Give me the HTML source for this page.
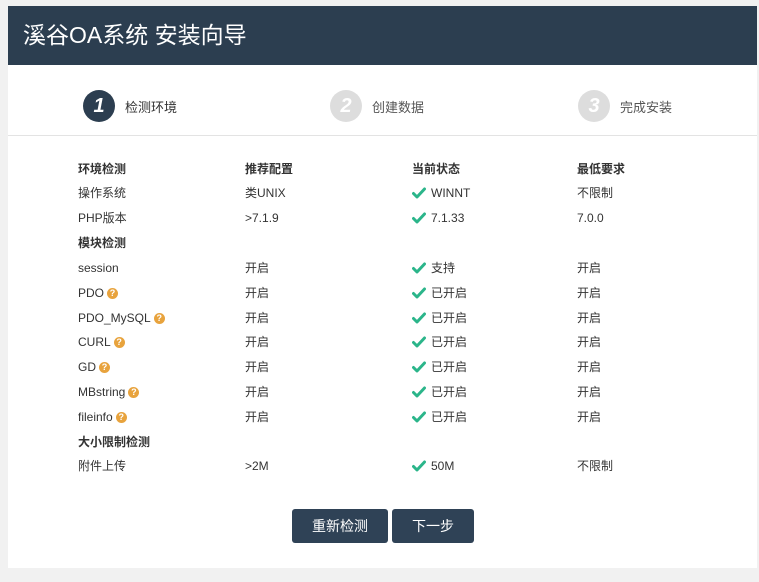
<!DOCTYPE html>
<html><head><meta charset="utf-8"><style>
*{margin:0;padding:0;box-sizing:border-box}
body{width:759px;height:582px;background:#f1f1f1;font-family:"Liberation Sans","Noto Sans CJK SC",sans-serif;position:relative;overflow:hidden}
.panel{position:absolute;left:8px;top:6px;width:749px;height:562px;background:#fff}
.hd{height:59px;background:#2c3e50;color:#fff;font-size:23px;line-height:30px;padding:14px 0 0 15px}
.steps{height:71px;border-bottom:1px solid #e3e3e3;position:relative}
.st{position:absolute;top:25px;display:flex;align-items:center;font-size:13px;color:#555}
.c{width:32px;height:32px;border-radius:50%;background:#ddd;color:#fff;font-weight:bold;font-style:italic;font-size:20px;display:flex;align-items:center;justify-content:center;margin-right:10px}
.st.on .c{background:#2c3e50}
.st.on{color:#333}
.r{position:absolute;left:70px;font-size:12px;color:#333;height:16px}
.r span{position:absolute;white-space:nowrap;top:0;height:16px;line-height:16px;display:flex;align-items:center}
.b{font-weight:bold}
.q{display:inline-block;width:11px;height:11px;border-radius:50%;background:#e8a33d;color:#fff;font-size:9px;text-align:center;line-height:11px;font-weight:bold;font-style:normal;margin-left:3px}
.ck{display:inline-block;width:14px;height:12px;margin-right:5px}
.btn{position:absolute;top:503px;height:34px;background:#2f4256;color:#fff;font-size:14px;border-radius:3px;display:flex;align-items:center;justify-content:center}
</style></head><body>
<svg width="0" height="0" style="position:absolute"><defs><symbol id="k" viewBox="0 0 14 12"><path d="M1.5 6.5 L5 10 L12.5 2" fill="none" stroke="#2bb58a" stroke-width="3" stroke-linecap="round" stroke-linejoin="round"/></symbol></defs></svg>
<div class="panel">
<div class="hd">溪谷OA系统 安装向导</div>
<div class="steps">
<div class="st on" style="left:75px"><div class="c">1</div>检测环境</div>
<div class="st" style="left:322px"><div class="c">2</div>创建数据</div>
<div class="st" style="left:570px"><div class="c">3</div>完成安装</div>
</div>
<div class="r b" style="top:155px"><span style="left:0">环境检测</span><span style="left:167px">推荐配置</span><span style="left:334px">当前状态</span><span style="left:499px">最低要求</span></div>
<div class="r" style="top:179px"><span style="left:0">操作系统</span><span style="left:167px">类UNIX</span><span style="left:334px"><svg class="ck"><use href="#k"/></svg>WINNT</span><span style="left:499px">不限制</span></div>
<div class="r" style="top:204px"><span style="left:0">PHP版本</span><span style="left:167px">&gt;7.1.9</span><span style="left:334px"><svg class="ck"><use href="#k"/></svg>7.1.33</span><span style="left:499px">7.0.0</span></div>
<div class="r b" style="top:229px"><span style="left:0">模块检测</span></div>
<div class="r" style="top:254px"><span style="left:0">session</span><span style="left:167px">开启</span><span style="left:334px"><svg class="ck"><use href="#k"/></svg>支持</span><span style="left:499px">开启</span></div>
<div class="r" style="top:279px"><span style="left:0">PDO<i class="q">?</i></span><span style="left:167px">开启</span><span style="left:334px"><svg class="ck"><use href="#k"/></svg>已开启</span><span style="left:499px">开启</span></div>
<div class="r" style="top:304px"><span style="left:0">PDO_MySQL<i class="q">?</i></span><span style="left:167px">开启</span><span style="left:334px"><svg class="ck"><use href="#k"/></svg>已开启</span><span style="left:499px">开启</span></div>
<div class="r" style="top:328px"><span style="left:0">CURL<i class="q">?</i></span><span style="left:167px">开启</span><span style="left:334px"><svg class="ck"><use href="#k"/></svg>已开启</span><span style="left:499px">开启</span></div>
<div class="r" style="top:353px"><span style="left:0">GD<i class="q">?</i></span><span style="left:167px">开启</span><span style="left:334px"><svg class="ck"><use href="#k"/></svg>已开启</span><span style="left:499px">开启</span></div>
<div class="r" style="top:378px"><span style="left:0">MBstring<i class="q">?</i></span><span style="left:167px">开启</span><span style="left:334px"><svg class="ck"><use href="#k"/></svg>已开启</span><span style="left:499px">开启</span></div>
<div class="r" style="top:403px"><span style="left:0">fileinfo<i class="q">?</i></span><span style="left:167px">开启</span><span style="left:334px"><svg class="ck"><use href="#k"/></svg>已开启</span><span style="left:499px">开启</span></div>
<div class="r b" style="top:428px"><span style="left:0">大小限制检测</span></div>
<div class="r" style="top:452px"><span style="left:0">附件上传</span><span style="left:167px">&gt;2M</span><span style="left:334px"><svg class="ck"><use href="#k"/></svg>50M</span><span style="left:499px">不限制</span></div>
<div class="btn" style="left:284px;width:96px">重新检测</div>
<div class="btn" style="left:384px;width:82px">下一步</div>
</div>
</body></html>
